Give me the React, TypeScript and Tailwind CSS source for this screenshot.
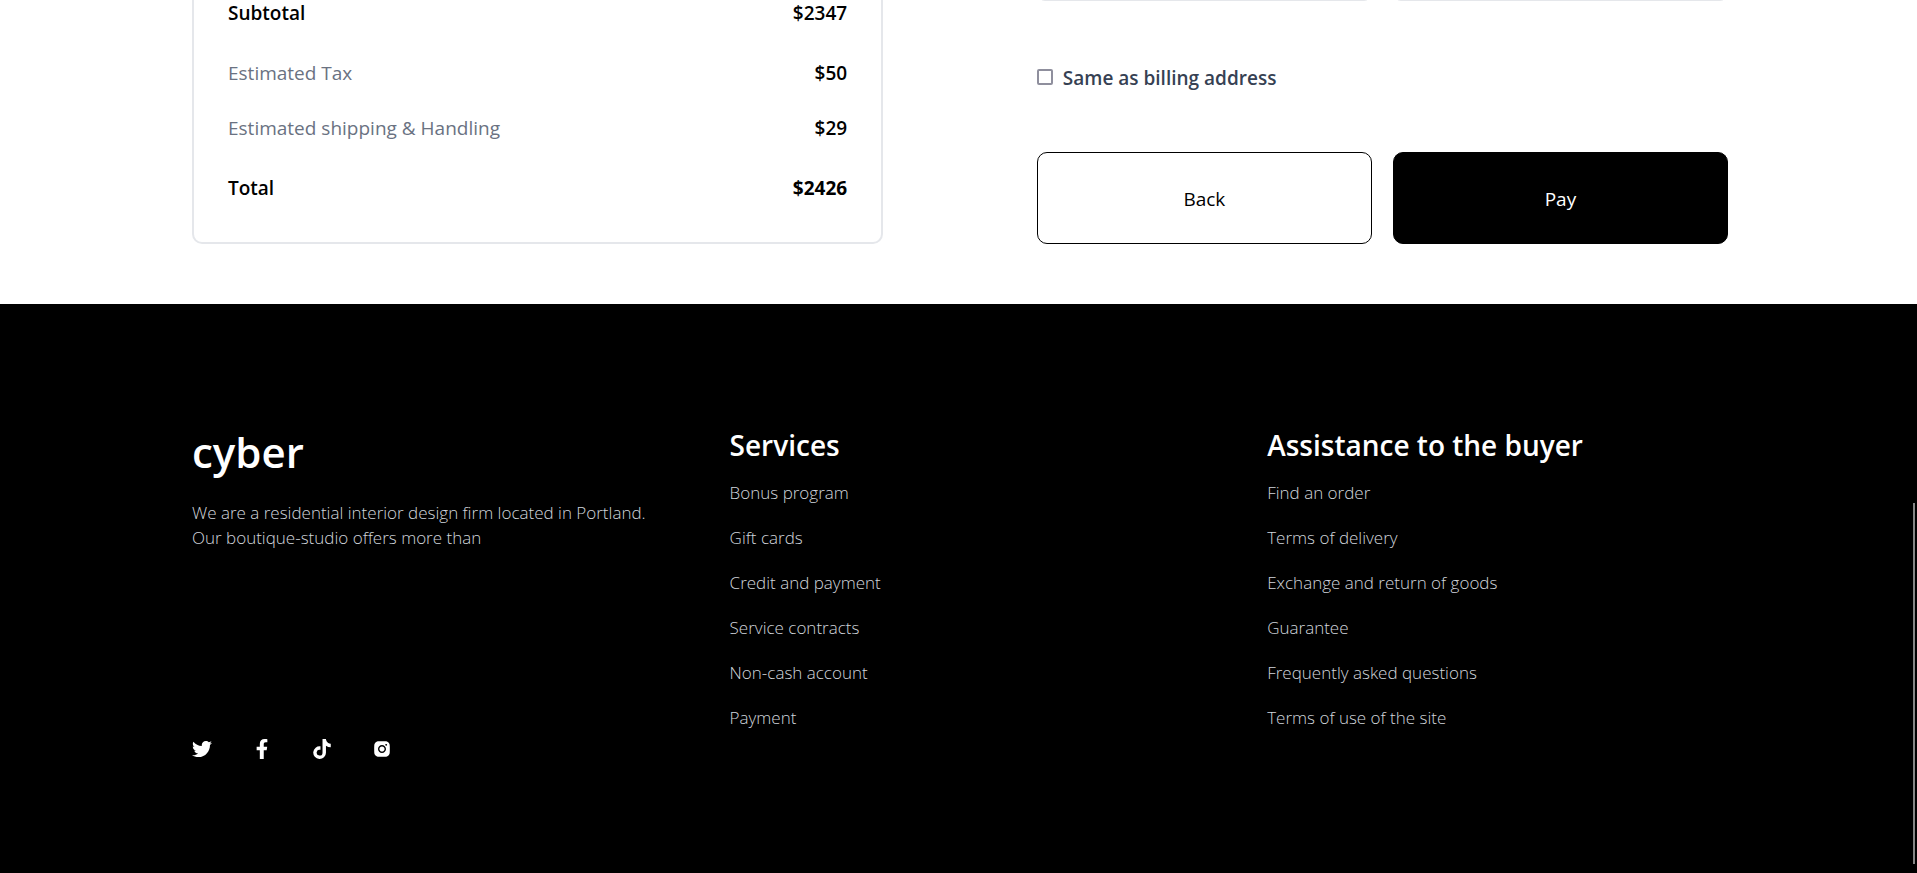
import { FaTwitter, FaFacebookF, FaTiktok } from "react-icons/fa";
import { AiFillInstagram } from "react-icons/ai";

const services = [
  "Bonus program",
  "Gift cards",
  "Credit and payment",
  "Service contracts",
  "Non-cash account",
  "Payment",
];

const assistance = [
  "Find an order",
  "Terms of delivery",
  "Exchange and return of goods",
  "Guarantee",
  "Frequently asked questions",
  "Terms of use of the site",
];

const socials = [
  { label: "Twitter", Icon: FaTwitter },
  { label: "Facebook", Icon: FaFacebookF },
  { label: "TikTok", Icon: FaTiktok },
  { label: "Instagram", Icon: AiFillInstagram },
];

function OrderSummary() {
  return (
    <section className="-mt-4 w-[45%] rounded-b-[10px] border-2 border-t-0 border-gray-200 px-[34px] pt-[17px] pb-[41px] text-[19px] leading-[25px]">
      <dl className="flex flex-col gap-[35px]">
        <div className="flex justify-between font-semibold">
          <dt>Subtotal</dt>
          <dd>$2347</dd>
        </div>
        <div className="flex flex-col gap-[30px]">
          <div className="flex justify-between">
            <dt className="text-gray-500">Estimated Tax</dt>
            <dd className="font-semibold">$50</dd>
          </div>
          <div className="flex justify-between">
            <dt className="text-gray-500">Estimated shipping &amp; Handling</dt>
            <dd className="font-semibold">$29</dd>
          </div>
        </div>
        <div className="flex justify-between">
          <dt className="font-semibold">Total</dt>
          <dd className="font-bold">$2426</dd>
        </div>
      </dl>
    </section>
  );
}

function PaymentForm() {
  return (
    <form className="-mt-12 w-[45%] text-[19px]" onSubmit={(e) => e.preventDefault()}>
      <div className="grid grid-cols-2 gap-[21px]">
        <input
          aria-label="Expiry date"
          className="h-[49px] w-full rounded-lg border border-gray-200"
        />
        <input aria-label="CVV" className="h-[49px] w-full rounded-lg border border-gray-200" />
      </div>
      <label className="mt-16 flex w-fit items-center gap-[10px] leading-[26px] font-semibold text-gray-700">
        <input
          type="checkbox"
          className="mb-0.5 size-4 appearance-none rounded-xs border-2 border-[#8f8f9d] bg-white checked:bg-black"
        />
        Same as billing address
      </label>
      <div className="mt-[61px] grid grid-cols-2 gap-[21px]">
        <button type="button" className="h-[92px] rounded-[10px] border border-black pt-0.5">
          Back
        </button>
        <button
          type="submit"
          className="h-[92px] rounded-[10px] border border-black bg-black pt-0.5 text-white"
        >
          Pay
        </button>
      </div>
    </form>
  );
}

function LinkColumn({ title, links }: { title: string; links: string[] }) {
  return (
    <nav aria-label={title}>
      <h2 className="text-[28px] leading-[42px] font-semibold text-white">{title}</h2>
      <ul className="mt-[14px] flex flex-col gap-5">
        {links.map((link) => (
          <li key={link}>
            <a href="#" className="block">
              {link}
            </a>
          </li>
        ))}
      </ul>
    </nav>
  );
}

function Footer() {
  return (
    <footer className="grid grow grid-cols-3 content-start gap-x-[5%] bg-black pt-[120px] pr-[189px] pb-[112px] pl-48 text-[17px] leading-[25px] font-light text-gray-300">
      <div className="flex flex-col justify-between">
        <div>
          <h2 className="text-[42px] leading-[56px] font-semibold text-white">cyber</h2>
          <p className="mt-5">
            We are a residential interior design firm located in Portland. Our boutique-studio
            offers more than
          </p>
        </div>
        <ul className="-mb-[29px] flex gap-10 text-xl text-white">
          {socials.map(({ label, Icon }) => (
            <li key={label}>
              <a href="#" aria-label={label} className="block">
                <Icon />
              </a>
            </li>
          ))}
        </ul>
      </div>
      <LinkColumn title="Services" links={services} />
      <LinkColumn title="Assistance to the buyer" links={assistance} />
    </footer>
  );
}

export default function App() {
  return (
    <div className="relative flex min-h-screen flex-col overflow-hidden bg-white font-['Open_Sans',sans-serif] text-black">
      <main className="flex items-start justify-between pr-[189px] pb-[60px] pl-48">
        <OrderSummary />
        <PaymentForm />
      </main>
      <Footer />
      <div className="absolute top-[503px] right-0.5 bottom-[9px] w-0.5 bg-[#858585]" />
    </div>
  );
}
